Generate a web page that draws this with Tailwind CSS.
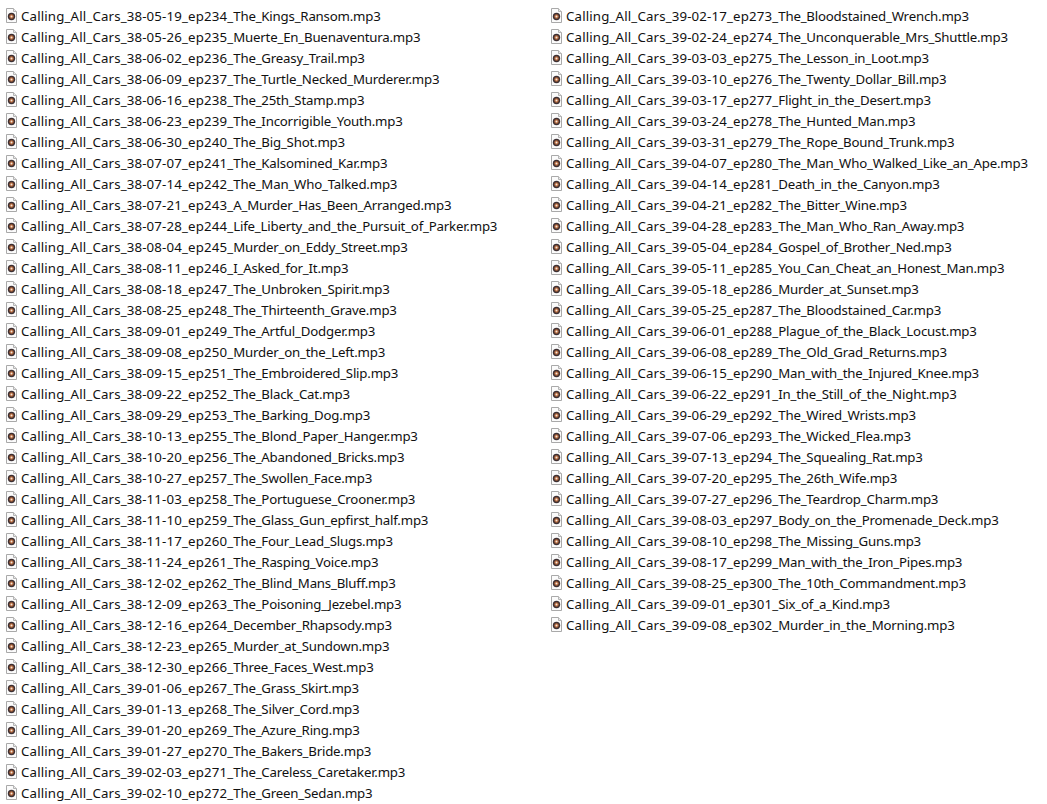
<!DOCTYPE html>
<html><head><meta charset="utf-8"><script src="https://cdn.jsdelivr.net/npm/@tailwindcss/browser@4"></script></head>
<body class="bg-white">
<svg width="0" height="0" class="absolute"><defs><symbol id="i" viewBox="0 0 11 15"><path d="M.5.5H7.500L10.500 3.500V14.500H.5Z" fill="#fbfbfb" stroke="#a9a9a9"/><path d="M7.500 .5V3.500H10.500" fill="#e8e8e8" stroke="#b5b5b5"/><circle cx="5.500" cy="8.500" r="3.700" fill="#3d3033"/><circle cx="5.500" cy="8.500" r="2.200" fill="#b5683a"/><circle cx="5.500" cy="8.500" r="1" fill="#f3e6dc"/></symbol></defs></svg>
<div class="w-[1047px] h-[804px] overflow-hidden grid grid-cols-[545px_502px] pt-[6px] font-['Noto_Sans',sans-serif] text-[13.25px] text-[#111]">
<div class="flex flex-col pl-[6px]">
<div class="flex items-center h-[21px] gap-[4px] whitespace-nowrap"><svg class="w-[11px] h-[15px] shrink-0 mb-[2px]"><use href="#i"/></svg><span><span class="tracking-[0.16px]">Calling_All_Cars_38-05-19_ep234_</span><span class="tracking-[-0.2px]">The_Kings_Ransom.mp3</span></span></div>
<div class="flex items-center h-[21px] gap-[4px] whitespace-nowrap"><svg class="w-[11px] h-[15px] shrink-0 mb-[2px]"><use href="#i"/></svg><span><span class="tracking-[0.16px]">Calling_All_Cars_38-05-26_ep235_</span><span class="tracking-[-0.2px]">Muerte_En_Buenaventura.mp3</span></span></div>
<div class="flex items-center h-[21px] gap-[4px] whitespace-nowrap"><svg class="w-[11px] h-[15px] shrink-0 mb-[2px]"><use href="#i"/></svg><span><span class="tracking-[0.16px]">Calling_All_Cars_38-06-02_ep236_</span><span class="tracking-[-0.2px]">The_Greasy_Trail.mp3</span></span></div>
<div class="flex items-center h-[21px] gap-[4px] whitespace-nowrap"><svg class="w-[11px] h-[15px] shrink-0 mb-[2px]"><use href="#i"/></svg><span><span class="tracking-[0.16px]">Calling_All_Cars_38-06-09_ep237_</span><span class="tracking-[-0.2px]">The_Turtle_Necked_Murderer.mp3</span></span></div>
<div class="flex items-center h-[21px] gap-[4px] whitespace-nowrap"><svg class="w-[11px] h-[15px] shrink-0 mb-[2px]"><use href="#i"/></svg><span><span class="tracking-[0.16px]">Calling_All_Cars_38-06-16_ep238_</span><span class="tracking-[-0.2px]">The_25th_Stamp.mp3</span></span></div>
<div class="flex items-center h-[21px] gap-[4px] whitespace-nowrap"><svg class="w-[11px] h-[15px] shrink-0 mb-[2px]"><use href="#i"/></svg><span><span class="tracking-[0.16px]">Calling_All_Cars_38-06-23_ep239_</span><span class="tracking-[-0.2px]">The_Incorrigible_Youth.mp3</span></span></div>
<div class="flex items-center h-[21px] gap-[4px] whitespace-nowrap"><svg class="w-[11px] h-[15px] shrink-0 mb-[2px]"><use href="#i"/></svg><span><span class="tracking-[0.16px]">Calling_All_Cars_38-06-30_ep240_</span><span class="tracking-[-0.2px]">The_Big_Shot.mp3</span></span></div>
<div class="flex items-center h-[21px] gap-[4px] whitespace-nowrap"><svg class="w-[11px] h-[15px] shrink-0 mb-[2px]"><use href="#i"/></svg><span><span class="tracking-[0.16px]">Calling_All_Cars_38-07-07_ep241_</span><span class="tracking-[-0.2px]">The_Kalsomined_Kar.mp3</span></span></div>
<div class="flex items-center h-[21px] gap-[4px] whitespace-nowrap"><svg class="w-[11px] h-[15px] shrink-0 mb-[2px]"><use href="#i"/></svg><span><span class="tracking-[0.16px]">Calling_All_Cars_38-07-14_ep242_</span><span class="tracking-[-0.2px]">The_Man_Who_Talked.mp3</span></span></div>
<div class="flex items-center h-[21px] gap-[4px] whitespace-nowrap"><svg class="w-[11px] h-[15px] shrink-0 mb-[2px]"><use href="#i"/></svg><span><span class="tracking-[0.16px]">Calling_All_Cars_38-07-21_ep243_</span><span class="tracking-[-0.2px]">A_Murder_Has_Been_Arranged.mp3</span></span></div>
<div class="flex items-center h-[21px] gap-[4px] whitespace-nowrap"><svg class="w-[11px] h-[15px] shrink-0 mb-[2px]"><use href="#i"/></svg><span><span class="tracking-[0.16px]">Calling_All_Cars_38-07-28_ep244_</span><span class="tracking-[-0.2px]">Life_Liberty_and_the_Pursuit_of_Parker.mp3</span></span></div>
<div class="flex items-center h-[21px] gap-[4px] whitespace-nowrap"><svg class="w-[11px] h-[15px] shrink-0 mb-[2px]"><use href="#i"/></svg><span><span class="tracking-[0.16px]">Calling_All_Cars_38-08-04_ep245_</span><span class="tracking-[-0.2px]">Murder_on_Eddy_Street.mp3</span></span></div>
<div class="flex items-center h-[21px] gap-[4px] whitespace-nowrap"><svg class="w-[11px] h-[15px] shrink-0 mb-[2px]"><use href="#i"/></svg><span><span class="tracking-[0.16px]">Calling_All_Cars_38-08-11_ep246_</span><span class="tracking-[-0.2px]">I_Asked_for_It.mp3</span></span></div>
<div class="flex items-center h-[21px] gap-[4px] whitespace-nowrap"><svg class="w-[11px] h-[15px] shrink-0 mb-[2px]"><use href="#i"/></svg><span><span class="tracking-[0.16px]">Calling_All_Cars_38-08-18_ep247_</span><span class="tracking-[-0.2px]">The_Unbroken_Spirit.mp3</span></span></div>
<div class="flex items-center h-[21px] gap-[4px] whitespace-nowrap"><svg class="w-[11px] h-[15px] shrink-0 mb-[2px]"><use href="#i"/></svg><span><span class="tracking-[0.16px]">Calling_All_Cars_38-08-25_ep248_</span><span class="tracking-[-0.2px]">The_Thirteenth_Grave.mp3</span></span></div>
<div class="flex items-center h-[21px] gap-[4px] whitespace-nowrap"><svg class="w-[11px] h-[15px] shrink-0 mb-[2px]"><use href="#i"/></svg><span><span class="tracking-[0.16px]">Calling_All_Cars_38-09-01_ep249_</span><span class="tracking-[-0.2px]">The_Artful_Dodger.mp3</span></span></div>
<div class="flex items-center h-[21px] gap-[4px] whitespace-nowrap"><svg class="w-[11px] h-[15px] shrink-0 mb-[2px]"><use href="#i"/></svg><span><span class="tracking-[0.16px]">Calling_All_Cars_38-09-08_ep250_</span><span class="tracking-[-0.2px]">Murder_on_the_Left.mp3</span></span></div>
<div class="flex items-center h-[21px] gap-[4px] whitespace-nowrap"><svg class="w-[11px] h-[15px] shrink-0 mb-[2px]"><use href="#i"/></svg><span><span class="tracking-[0.16px]">Calling_All_Cars_38-09-15_ep251_</span><span class="tracking-[-0.2px]">The_Embroidered_Slip.mp3</span></span></div>
<div class="flex items-center h-[21px] gap-[4px] whitespace-nowrap"><svg class="w-[11px] h-[15px] shrink-0 mb-[2px]"><use href="#i"/></svg><span><span class="tracking-[0.16px]">Calling_All_Cars_38-09-22_ep252_</span><span class="tracking-[-0.2px]">The_Black_Cat.mp3</span></span></div>
<div class="flex items-center h-[21px] gap-[4px] whitespace-nowrap"><svg class="w-[11px] h-[15px] shrink-0 mb-[2px]"><use href="#i"/></svg><span><span class="tracking-[0.16px]">Calling_All_Cars_38-09-29_ep253_</span><span class="tracking-[-0.2px]">The_Barking_Dog.mp3</span></span></div>
<div class="flex items-center h-[21px] gap-[4px] whitespace-nowrap"><svg class="w-[11px] h-[15px] shrink-0 mb-[2px]"><use href="#i"/></svg><span><span class="tracking-[0.16px]">Calling_All_Cars_38-10-13_ep255_</span><span class="tracking-[-0.2px]">The_Blond_Paper_Hanger.mp3</span></span></div>
<div class="flex items-center h-[21px] gap-[4px] whitespace-nowrap"><svg class="w-[11px] h-[15px] shrink-0 mb-[2px]"><use href="#i"/></svg><span><span class="tracking-[0.16px]">Calling_All_Cars_38-10-20_ep256_</span><span class="tracking-[-0.2px]">The_Abandoned_Bricks.mp3</span></span></div>
<div class="flex items-center h-[21px] gap-[4px] whitespace-nowrap"><svg class="w-[11px] h-[15px] shrink-0 mb-[2px]"><use href="#i"/></svg><span><span class="tracking-[0.16px]">Calling_All_Cars_38-10-27_ep257_</span><span class="tracking-[-0.2px]">The_Swollen_Face.mp3</span></span></div>
<div class="flex items-center h-[21px] gap-[4px] whitespace-nowrap"><svg class="w-[11px] h-[15px] shrink-0 mb-[2px]"><use href="#i"/></svg><span><span class="tracking-[0.16px]">Calling_All_Cars_38-11-03_ep258_</span><span class="tracking-[-0.2px]">The_Portuguese_Crooner.mp3</span></span></div>
<div class="flex items-center h-[21px] gap-[4px] whitespace-nowrap"><svg class="w-[11px] h-[15px] shrink-0 mb-[2px]"><use href="#i"/></svg><span><span class="tracking-[0.16px]">Calling_All_Cars_38-11-10_ep259_</span><span class="tracking-[-0.2px]">The_Glass_Gun_epfirst_half.mp3</span></span></div>
<div class="flex items-center h-[21px] gap-[4px] whitespace-nowrap"><svg class="w-[11px] h-[15px] shrink-0 mb-[2px]"><use href="#i"/></svg><span><span class="tracking-[0.16px]">Calling_All_Cars_38-11-17_ep260_</span><span class="tracking-[-0.2px]">The_Four_Lead_Slugs.mp3</span></span></div>
<div class="flex items-center h-[21px] gap-[4px] whitespace-nowrap"><svg class="w-[11px] h-[15px] shrink-0 mb-[2px]"><use href="#i"/></svg><span><span class="tracking-[0.16px]">Calling_All_Cars_38-11-24_ep261_</span><span class="tracking-[-0.2px]">The_Rasping_Voice.mp3</span></span></div>
<div class="flex items-center h-[21px] gap-[4px] whitespace-nowrap"><svg class="w-[11px] h-[15px] shrink-0 mb-[2px]"><use href="#i"/></svg><span><span class="tracking-[0.16px]">Calling_All_Cars_38-12-02_ep262_</span><span class="tracking-[-0.2px]">The_Blind_Mans_Bluff.mp3</span></span></div>
<div class="flex items-center h-[21px] gap-[4px] whitespace-nowrap"><svg class="w-[11px] h-[15px] shrink-0 mb-[2px]"><use href="#i"/></svg><span><span class="tracking-[0.16px]">Calling_All_Cars_38-12-09_ep263_</span><span class="tracking-[-0.2px]">The_Poisoning_Jezebel.mp3</span></span></div>
<div class="flex items-center h-[21px] gap-[4px] whitespace-nowrap"><svg class="w-[11px] h-[15px] shrink-0 mb-[2px]"><use href="#i"/></svg><span><span class="tracking-[0.16px]">Calling_All_Cars_38-12-16_ep264_</span><span class="tracking-[-0.2px]">December_Rhapsody.mp3</span></span></div>
<div class="flex items-center h-[21px] gap-[4px] whitespace-nowrap"><svg class="w-[11px] h-[15px] shrink-0 mb-[2px]"><use href="#i"/></svg><span><span class="tracking-[0.16px]">Calling_All_Cars_38-12-23_ep265_</span><span class="tracking-[-0.2px]">Murder_at_Sundown.mp3</span></span></div>
<div class="flex items-center h-[21px] gap-[4px] whitespace-nowrap"><svg class="w-[11px] h-[15px] shrink-0 mb-[2px]"><use href="#i"/></svg><span><span class="tracking-[0.16px]">Calling_All_Cars_38-12-30_ep266_</span><span class="tracking-[-0.2px]">Three_Faces_West.mp3</span></span></div>
<div class="flex items-center h-[21px] gap-[4px] whitespace-nowrap"><svg class="w-[11px] h-[15px] shrink-0 mb-[2px]"><use href="#i"/></svg><span><span class="tracking-[0.16px]">Calling_All_Cars_39-01-06_ep267_</span><span class="tracking-[-0.2px]">The_Grass_Skirt.mp3</span></span></div>
<div class="flex items-center h-[21px] gap-[4px] whitespace-nowrap"><svg class="w-[11px] h-[15px] shrink-0 mb-[2px]"><use href="#i"/></svg><span><span class="tracking-[0.16px]">Calling_All_Cars_39-01-13_ep268_</span><span class="tracking-[-0.2px]">The_Silver_Cord.mp3</span></span></div>
<div class="flex items-center h-[21px] gap-[4px] whitespace-nowrap"><svg class="w-[11px] h-[15px] shrink-0 mb-[2px]"><use href="#i"/></svg><span><span class="tracking-[0.16px]">Calling_All_Cars_39-01-20_ep269_</span><span class="tracking-[-0.2px]">The_Azure_Ring.mp3</span></span></div>
<div class="flex items-center h-[21px] gap-[4px] whitespace-nowrap"><svg class="w-[11px] h-[15px] shrink-0 mb-[2px]"><use href="#i"/></svg><span><span class="tracking-[0.16px]">Calling_All_Cars_39-01-27_ep270_</span><span class="tracking-[-0.2px]">The_Bakers_Bride.mp3</span></span></div>
<div class="flex items-center h-[21px] gap-[4px] whitespace-nowrap"><svg class="w-[11px] h-[15px] shrink-0 mb-[2px]"><use href="#i"/></svg><span><span class="tracking-[0.16px]">Calling_All_Cars_39-02-03_ep271_</span><span class="tracking-[-0.2px]">The_Careless_Caretaker.mp3</span></span></div>
<div class="flex items-center h-[21px] gap-[4px] whitespace-nowrap"><svg class="w-[11px] h-[15px] shrink-0 mb-[2px]"><use href="#i"/></svg><span><span class="tracking-[0.16px]">Calling_All_Cars_39-02-10_ep272_</span><span class="tracking-[-0.2px]">The_Green_Sedan.mp3</span></span></div>
</div>
<div class="flex flex-col pl-[6px]">
<div class="flex items-center h-[21px] gap-[4px] whitespace-nowrap"><svg class="w-[11px] h-[15px] shrink-0 mb-[2px]"><use href="#i"/></svg><span><span class="tracking-[0.16px]">Calling_All_Cars_39-02-17_ep273_</span><span class="tracking-[-0.2px]">The_Bloodstained_Wrench.mp3</span></span></div>
<div class="flex items-center h-[21px] gap-[4px] whitespace-nowrap"><svg class="w-[11px] h-[15px] shrink-0 mb-[2px]"><use href="#i"/></svg><span><span class="tracking-[0.16px]">Calling_All_Cars_39-02-24_ep274_</span><span class="tracking-[-0.2px]">The_Unconquerable_Mrs_Shuttle.mp3</span></span></div>
<div class="flex items-center h-[21px] gap-[4px] whitespace-nowrap"><svg class="w-[11px] h-[15px] shrink-0 mb-[2px]"><use href="#i"/></svg><span><span class="tracking-[0.16px]">Calling_All_Cars_39-03-03_ep275_</span><span class="tracking-[-0.2px]">The_Lesson_in_Loot.mp3</span></span></div>
<div class="flex items-center h-[21px] gap-[4px] whitespace-nowrap"><svg class="w-[11px] h-[15px] shrink-0 mb-[2px]"><use href="#i"/></svg><span><span class="tracking-[0.16px]">Calling_All_Cars_39-03-10_ep276_</span><span class="tracking-[-0.2px]">The_Twenty_Dollar_Bill.mp3</span></span></div>
<div class="flex items-center h-[21px] gap-[4px] whitespace-nowrap"><svg class="w-[11px] h-[15px] shrink-0 mb-[2px]"><use href="#i"/></svg><span><span class="tracking-[0.16px]">Calling_All_Cars_39-03-17_ep277_</span><span class="tracking-[-0.2px]">Flight_in_the_Desert.mp3</span></span></div>
<div class="flex items-center h-[21px] gap-[4px] whitespace-nowrap"><svg class="w-[11px] h-[15px] shrink-0 mb-[2px]"><use href="#i"/></svg><span><span class="tracking-[0.16px]">Calling_All_Cars_39-03-24_ep278_</span><span class="tracking-[-0.2px]">The_Hunted_Man.mp3</span></span></div>
<div class="flex items-center h-[21px] gap-[4px] whitespace-nowrap"><svg class="w-[11px] h-[15px] shrink-0 mb-[2px]"><use href="#i"/></svg><span><span class="tracking-[0.16px]">Calling_All_Cars_39-03-31_ep279_</span><span class="tracking-[-0.2px]">The_Rope_Bound_Trunk.mp3</span></span></div>
<div class="flex items-center h-[21px] gap-[4px] whitespace-nowrap"><svg class="w-[11px] h-[15px] shrink-0 mb-[2px]"><use href="#i"/></svg><span><span class="tracking-[0.16px]">Calling_All_Cars_39-04-07_ep280_</span><span class="tracking-[-0.2px]">The_Man_Who_Walked_Like_an_Ape.mp3</span></span></div>
<div class="flex items-center h-[21px] gap-[4px] whitespace-nowrap"><svg class="w-[11px] h-[15px] shrink-0 mb-[2px]"><use href="#i"/></svg><span><span class="tracking-[0.16px]">Calling_All_Cars_39-04-14_ep281_</span><span class="tracking-[-0.2px]">Death_in_the_Canyon.mp3</span></span></div>
<div class="flex items-center h-[21px] gap-[4px] whitespace-nowrap"><svg class="w-[11px] h-[15px] shrink-0 mb-[2px]"><use href="#i"/></svg><span><span class="tracking-[0.16px]">Calling_All_Cars_39-04-21_ep282_</span><span class="tracking-[-0.2px]">The_Bitter_Wine.mp3</span></span></div>
<div class="flex items-center h-[21px] gap-[4px] whitespace-nowrap"><svg class="w-[11px] h-[15px] shrink-0 mb-[2px]"><use href="#i"/></svg><span><span class="tracking-[0.16px]">Calling_All_Cars_39-04-28_ep283_</span><span class="tracking-[-0.2px]">The_Man_Who_Ran_Away.mp3</span></span></div>
<div class="flex items-center h-[21px] gap-[4px] whitespace-nowrap"><svg class="w-[11px] h-[15px] shrink-0 mb-[2px]"><use href="#i"/></svg><span><span class="tracking-[0.16px]">Calling_All_Cars_39-05-04_ep284_</span><span class="tracking-[-0.2px]">Gospel_of_Brother_Ned.mp3</span></span></div>
<div class="flex items-center h-[21px] gap-[4px] whitespace-nowrap"><svg class="w-[11px] h-[15px] shrink-0 mb-[2px]"><use href="#i"/></svg><span><span class="tracking-[0.16px]">Calling_All_Cars_39-05-11_ep285_</span><span class="tracking-[-0.2px]">You_Can_Cheat_an_Honest_Man.mp3</span></span></div>
<div class="flex items-center h-[21px] gap-[4px] whitespace-nowrap"><svg class="w-[11px] h-[15px] shrink-0 mb-[2px]"><use href="#i"/></svg><span><span class="tracking-[0.16px]">Calling_All_Cars_39-05-18_ep286_</span><span class="tracking-[-0.2px]">Murder_at_Sunset.mp3</span></span></div>
<div class="flex items-center h-[21px] gap-[4px] whitespace-nowrap"><svg class="w-[11px] h-[15px] shrink-0 mb-[2px]"><use href="#i"/></svg><span><span class="tracking-[0.16px]">Calling_All_Cars_39-05-25_ep287_</span><span class="tracking-[-0.2px]">The_Bloodstained_Car.mp3</span></span></div>
<div class="flex items-center h-[21px] gap-[4px] whitespace-nowrap"><svg class="w-[11px] h-[15px] shrink-0 mb-[2px]"><use href="#i"/></svg><span><span class="tracking-[0.16px]">Calling_All_Cars_39-06-01_ep288_</span><span class="tracking-[-0.2px]">Plague_of_the_Black_Locust.mp3</span></span></div>
<div class="flex items-center h-[21px] gap-[4px] whitespace-nowrap"><svg class="w-[11px] h-[15px] shrink-0 mb-[2px]"><use href="#i"/></svg><span><span class="tracking-[0.16px]">Calling_All_Cars_39-06-08_ep289_</span><span class="tracking-[-0.2px]">The_Old_Grad_Returns.mp3</span></span></div>
<div class="flex items-center h-[21px] gap-[4px] whitespace-nowrap"><svg class="w-[11px] h-[15px] shrink-0 mb-[2px]"><use href="#i"/></svg><span><span class="tracking-[0.16px]">Calling_All_Cars_39-06-15_ep290_</span><span class="tracking-[-0.2px]">Man_with_the_Injured_Knee.mp3</span></span></div>
<div class="flex items-center h-[21px] gap-[4px] whitespace-nowrap"><svg class="w-[11px] h-[15px] shrink-0 mb-[2px]"><use href="#i"/></svg><span><span class="tracking-[0.16px]">Calling_All_Cars_39-06-22_ep291_</span><span class="tracking-[-0.2px]">In_the_Still_of_the_Night.mp3</span></span></div>
<div class="flex items-center h-[21px] gap-[4px] whitespace-nowrap"><svg class="w-[11px] h-[15px] shrink-0 mb-[2px]"><use href="#i"/></svg><span><span class="tracking-[0.16px]">Calling_All_Cars_39-06-29_ep292_</span><span class="tracking-[-0.2px]">The_Wired_Wrists.mp3</span></span></div>
<div class="flex items-center h-[21px] gap-[4px] whitespace-nowrap"><svg class="w-[11px] h-[15px] shrink-0 mb-[2px]"><use href="#i"/></svg><span><span class="tracking-[0.16px]">Calling_All_Cars_39-07-06_ep293_</span><span class="tracking-[-0.2px]">The_Wicked_Flea.mp3</span></span></div>
<div class="flex items-center h-[21px] gap-[4px] whitespace-nowrap"><svg class="w-[11px] h-[15px] shrink-0 mb-[2px]"><use href="#i"/></svg><span><span class="tracking-[0.16px]">Calling_All_Cars_39-07-13_ep294_</span><span class="tracking-[-0.2px]">The_Squealing_Rat.mp3</span></span></div>
<div class="flex items-center h-[21px] gap-[4px] whitespace-nowrap"><svg class="w-[11px] h-[15px] shrink-0 mb-[2px]"><use href="#i"/></svg><span><span class="tracking-[0.16px]">Calling_All_Cars_39-07-20_ep295_</span><span class="tracking-[-0.2px]">The_26th_Wife.mp3</span></span></div>
<div class="flex items-center h-[21px] gap-[4px] whitespace-nowrap"><svg class="w-[11px] h-[15px] shrink-0 mb-[2px]"><use href="#i"/></svg><span><span class="tracking-[0.16px]">Calling_All_Cars_39-07-27_ep296_</span><span class="tracking-[-0.2px]">The_Teardrop_Charm.mp3</span></span></div>
<div class="flex items-center h-[21px] gap-[4px] whitespace-nowrap"><svg class="w-[11px] h-[15px] shrink-0 mb-[2px]"><use href="#i"/></svg><span><span class="tracking-[0.16px]">Calling_All_Cars_39-08-03_ep297_</span><span class="tracking-[-0.2px]">Body_on_the_Promenade_Deck.mp3</span></span></div>
<div class="flex items-center h-[21px] gap-[4px] whitespace-nowrap"><svg class="w-[11px] h-[15px] shrink-0 mb-[2px]"><use href="#i"/></svg><span><span class="tracking-[0.16px]">Calling_All_Cars_39-08-10_ep298_</span><span class="tracking-[-0.2px]">The_Missing_Guns.mp3</span></span></div>
<div class="flex items-center h-[21px] gap-[4px] whitespace-nowrap"><svg class="w-[11px] h-[15px] shrink-0 mb-[2px]"><use href="#i"/></svg><span><span class="tracking-[0.16px]">Calling_All_Cars_39-08-17_ep299_</span><span class="tracking-[-0.2px]">Man_with_the_Iron_Pipes.mp3</span></span></div>
<div class="flex items-center h-[21px] gap-[4px] whitespace-nowrap"><svg class="w-[11px] h-[15px] shrink-0 mb-[2px]"><use href="#i"/></svg><span><span class="tracking-[0.16px]">Calling_All_Cars_39-08-25_ep300_</span><span class="tracking-[-0.2px]">The_10th_Commandment.mp3</span></span></div>
<div class="flex items-center h-[21px] gap-[4px] whitespace-nowrap"><svg class="w-[11px] h-[15px] shrink-0 mb-[2px]"><use href="#i"/></svg><span><span class="tracking-[0.16px]">Calling_All_Cars_39-09-01_ep301_</span><span class="tracking-[-0.2px]">Six_of_a_Kind.mp3</span></span></div>
<div class="flex items-center h-[21px] gap-[4px] whitespace-nowrap"><svg class="w-[11px] h-[15px] shrink-0 mb-[2px]"><use href="#i"/></svg><span><span class="tracking-[0.16px]">Calling_All_Cars_39-09-08_ep302_</span><span class="tracking-[-0.2px]">Murder_in_the_Morning.mp3</span></span></div>
</div>
</div>
</body></html>
